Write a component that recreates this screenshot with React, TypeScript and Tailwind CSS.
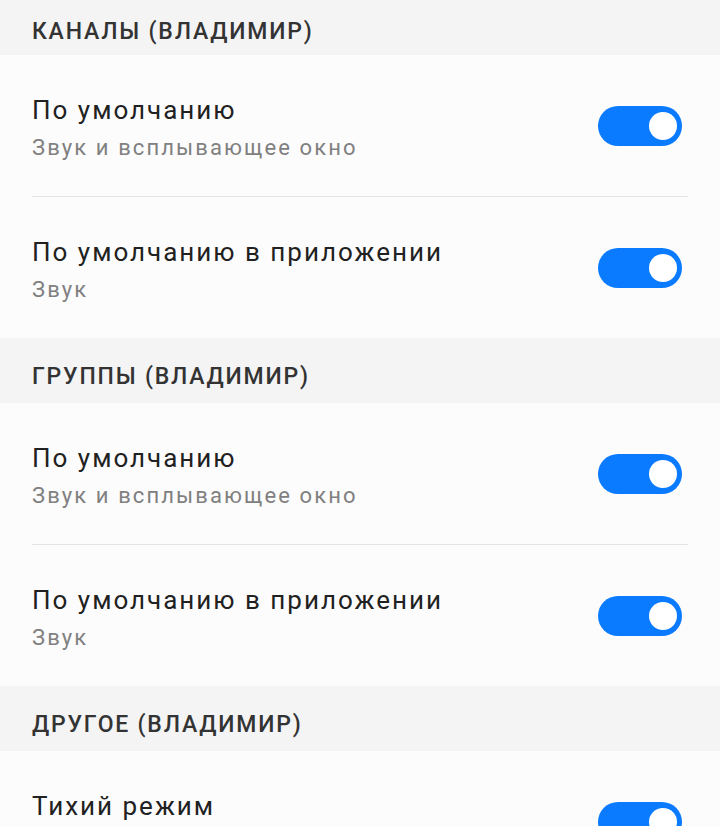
import React from "react"

type Item = { title: string; subtitle?: string; on: boolean }
type Section = { header: string; items: Item[] }

const sections: Section[] = [
  {
    header: "КАНАЛЫ (ВЛАДИМИР)",
    items: [
      { title: "По умолчанию", subtitle: "Звук и всплывающее окно", on: true },
      { title: "По умолчанию в приложении", subtitle: "Звук", on: true },
    ],
  },
  {
    header: "ГРУППЫ (ВЛАДИМИР)",
    items: [
      { title: "По умолчанию", subtitle: "Звук и всплывающее окно", on: true },
      { title: "По умолчанию в приложении", subtitle: "Звук", on: true },
    ],
  },
  {
    header: "ДРУГОЕ (ВЛАДИМИР)",
    items: [{ title: "Тихий режим", subtitle: "", on: true }],
  },
]

function Toggle({ on }: { on: boolean }) {
  return (
    <div
      className={`flex h-[40px] w-[84px] flex-shrink-0 items-center rounded-full px-[5px] ${
        on ? "justify-end bg-[#0a7bff]" : "justify-start bg-[#c4c4c4]"
      }`}
    >
      <div className="h-[28px] w-[28px] rounded-full bg-white"></div>
    </div>
  )
}

function Row({ item }: { item: Item }) {
  return (
    <div className="flex h-[141px] items-center justify-between pl-[32px] pr-[38px]">
      <div className="flex flex-col pt-[4px]">
        <div className="text-[26px] leading-[34px] tracking-[2px] text-[#212121]">{item.title}</div>
        {item.subtitle !== undefined && (
          <div className="mt-[6px] h-[30px] text-[22px] leading-[30px] tracking-[2.1px] text-[#808080]">
            {item.subtitle}
          </div>
        )}
      </div>
      <Toggle on={item.on} />
    </div>
  )
}

export default function App() {
  return (
    <div className="h-[826px] w-full overflow-hidden bg-[#fcfcfc] font-['Roboto',sans-serif]">
      {sections.map((section, si) => (
        <div key={si}>
          <div
            className={`bg-[#f4f4f4] px-[32px] text-[23px] font-medium leading-[28px] tracking-[1.8px] text-[#333333] ${
              si === 0 ? "h-[55px] pt-[18px]" : "h-[65px] pt-[25px]"
            }`}
          >
            {section.header}
          </div>
          {section.items.map((item, ii) => (
            <div key={ii}>
              {ii > 0 && <div className="mx-[32px] h-px bg-[#e3e3e3]"></div>}
              <Row item={item} />
            </div>
          ))}
        </div>
      ))}
    </div>
  )
}
